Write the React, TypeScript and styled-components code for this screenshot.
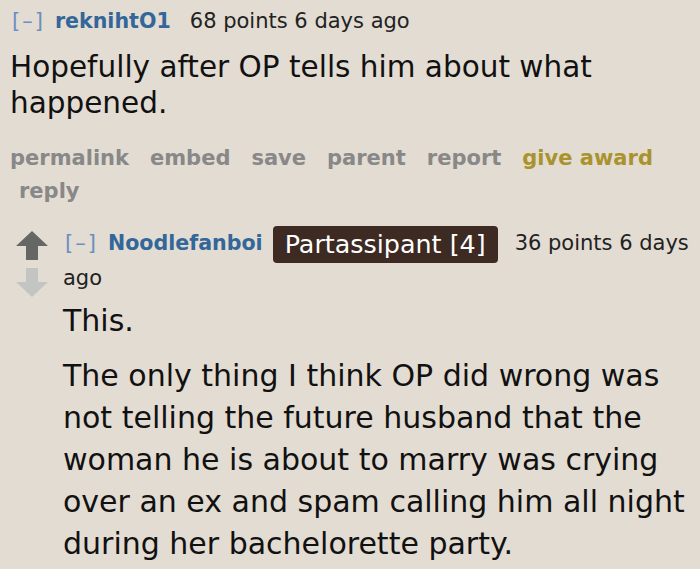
import React from 'react';
import styled, { createGlobalStyle } from 'styled-components';

const GlobalStyle = createGlobalStyle`
  body {
    margin: 0;
    background: #e3dcd2;
    font-family: Verdana, 'DejaVu Sans', sans-serif;
    color: #111;
  }
`;

const Page = styled.div`
  width: 700px;
  height: 569px;
  overflow: hidden;
  padding: 4px 0 0 10px;
  box-sizing: border-box;
`;

const Tagline = styled.div`
  font-size: 21px;
  line-height: 34px;
  color: #222;
`;

const Expand = styled.span`
  color: #6a8fc0;
  margin: 0 10px 0 2px;
  letter-spacing: 2px;
`;

const Author = styled.span<{ $gap: number }>`
  color: #336699;
  font-weight: bold;
  font-size: 20.6px;
  margin-right: ${(p) => p.$gap}px;
`;

const Flair = styled.span`
  display: inline-block;
  background: #3d2a22;
  color: #fff;
  font-size: 25.4px;
  line-height: 37px;
  padding: 0 12px;
  border-radius: 4px;
  margin: -2px 17px -2px 0;
  vertical-align: middle;
`;

const Body = styled.div<{ $size: number; $lh: number }>`
  font-size: ${(p) => p.$size}px;
  line-height: ${(p) => p.$lh}px;
  color: #111;

  p {
    margin: 0;
  }
`;

const FirstBody = styled(Body)`
  margin-top: 11px;
`;

const Buttons = styled.ul`
  list-style: none;
  margin: 21px 0 0 0;
  padding: 0;
  display: flex;
  flex-wrap: wrap;
  font-size: 21px;
  font-weight: bold;
  line-height: 33px;
`;

const Button = styled.li<{ $gold?: boolean }>`
  color: ${(p) => (p.$gold ? '#a9932d' : '#888')};
  padding: 0 12px 0 9px;

  &:first-child {
    padding-left: 0;
  }
`;

const Child = styled.div`
  display: flex;
  margin-top: 18px;
`;

const Midcol = styled.div`
  width: 53px;
  flex-shrink: 0;
  display: flex;
  flex-direction: column;
  align-items: flex-start;
  gap: 8px;
  padding: 5px 0 0 6px;
  box-sizing: border-box;
`;

const Arrow = ({ down, color }: { down?: boolean; color: string }) => (
  <svg width="32" height="29" viewBox="0 0 32 29" style={{ transform: down ? 'rotate(180deg)' : undefined }}>
    <path d="M16 0 L32 15 L22 15 L22 29 L10 29 L10 15 L0 15 Z" fill={color} />
  </svg>
);

const Entry = styled.div`
  flex: 1;
  padding-right: 4px;
`;

const SecondBody = styled(Body)`
  margin-top: 5px;

  p + p {
    margin-top: 13px;
  }
`;

export default function App() {
  return (
    <Page>
      <GlobalStyle />
      <Tagline>
        <Expand>[–]</Expand>
        <Author $gap={19}>reknihtO1</Author>68 points 6 days ago
      </Tagline>
      <FirstBody $size={29.5} $lh={36}>
        <p>Hopefully after OP tells him about what happened.</p>
      </FirstBody>
      <Buttons>
        <Button>permalink</Button>
        <Button>embed</Button>
        <Button>save</Button>
        <Button>parent</Button>
        <Button>report</Button>
        <Button $gold>give award</Button>
        <Button>reply</Button>
      </Buttons>
      <Child>
        <Midcol>
          <Arrow color="#666" />
          <Arrow down color="#c4c4c4" />
        </Midcol>
        <Entry>
          <Tagline>
            <Expand>[–]</Expand>
            <Author $gap={10}>Noodlefanboi</Author>
            <Flair>Partassipant [4]</Flair>36 points 6 days ago
          </Tagline>
          <SecondBody $size={30} $lh={42}>
            <p>This.</p>
            <p>
              The only thing I think OP did wrong was not telling the future husband that the woman he is about to
              marry was crying over an ex and spam calling him all night during her bachelorette party.
            </p>
          </SecondBody>
        </Entry>
      </Child>
    </Page>
  );
}
